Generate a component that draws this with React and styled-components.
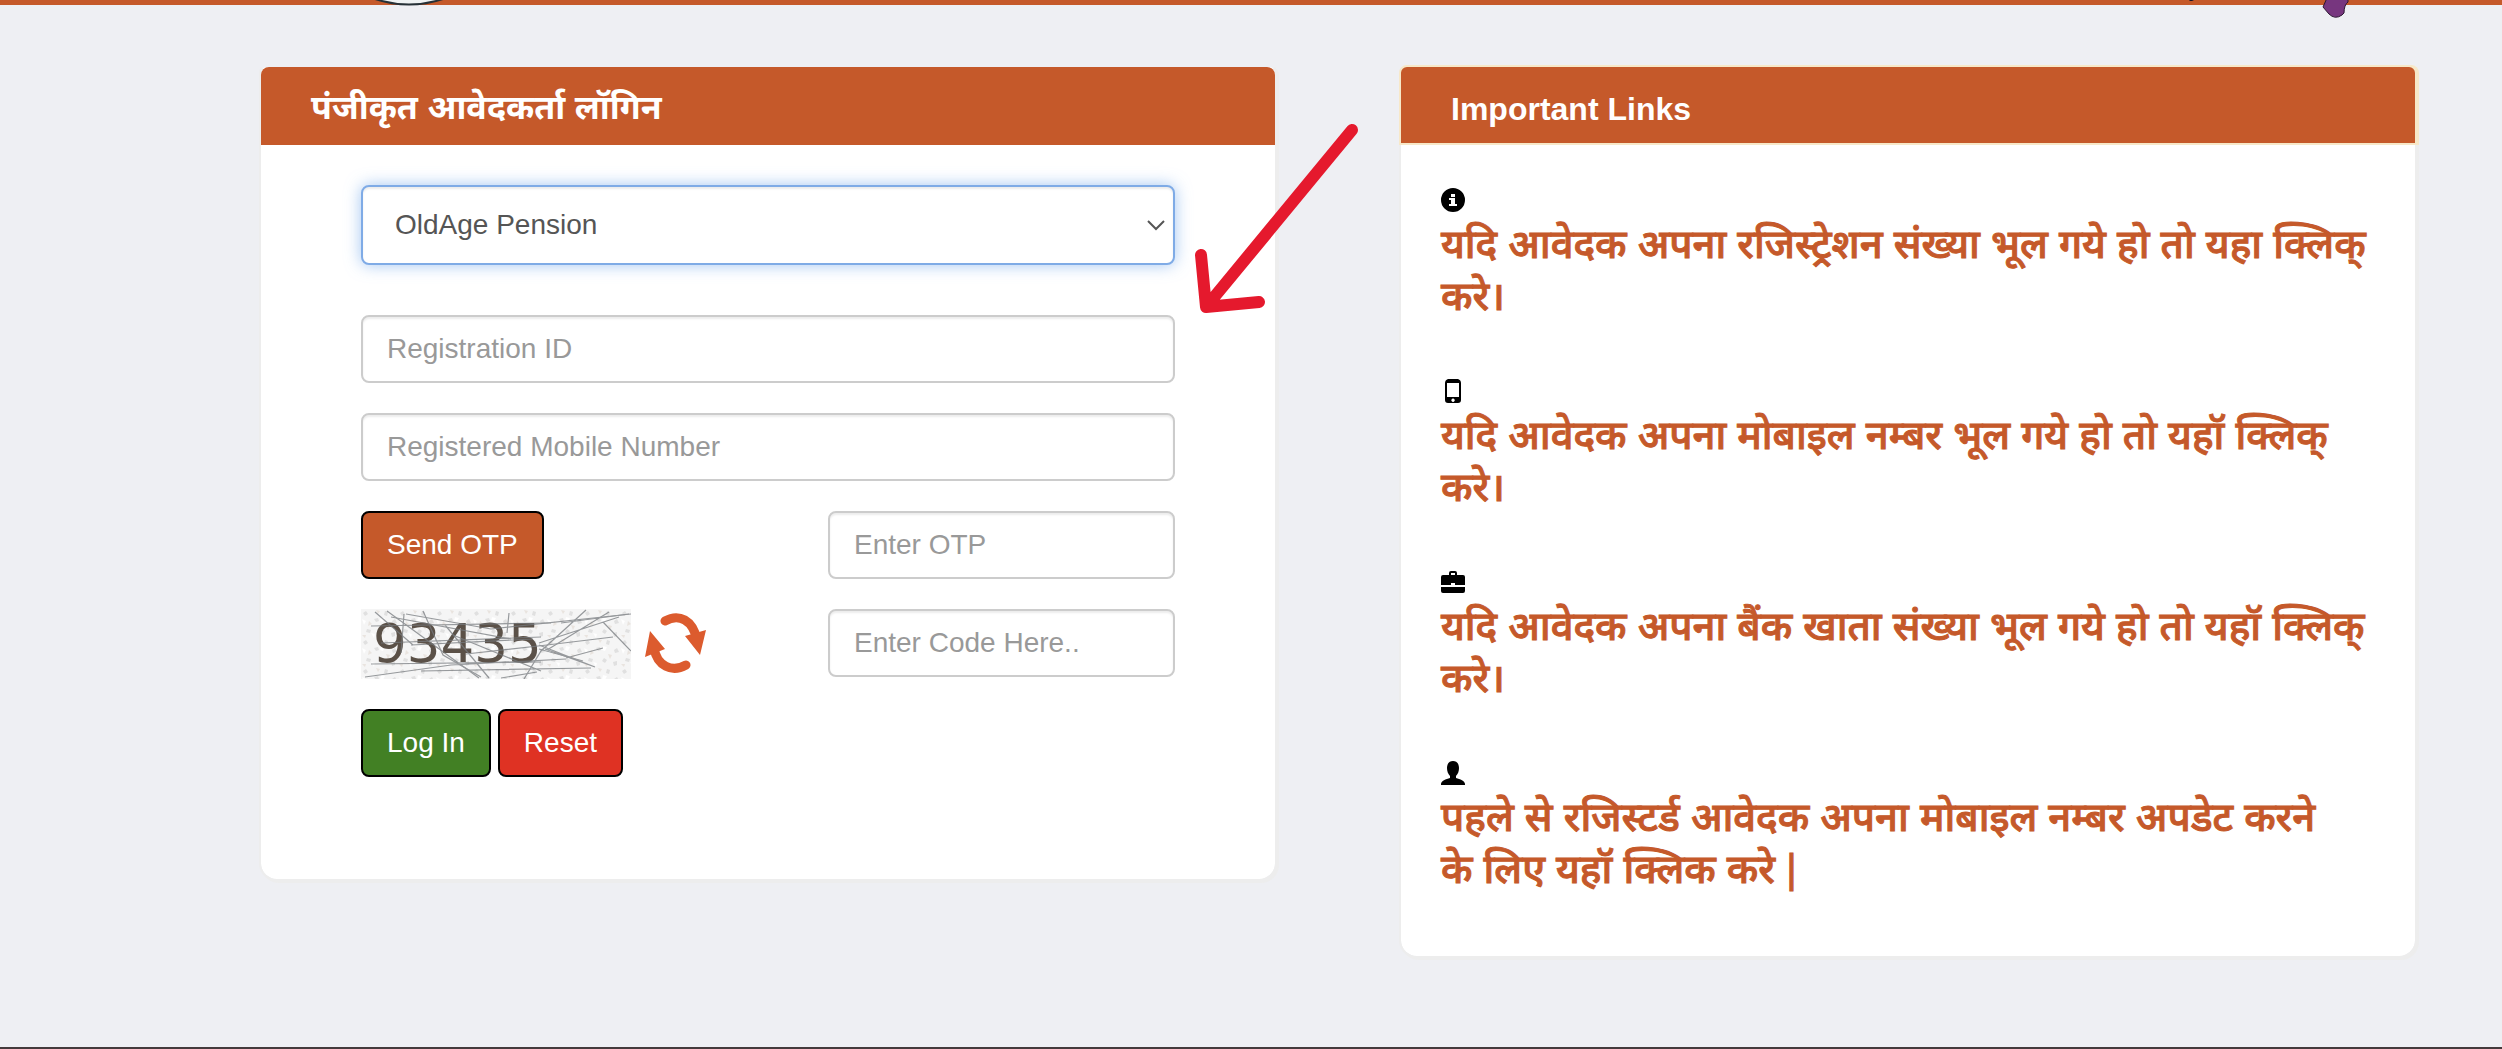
import React, { useState } from "react";
import styled, { createGlobalStyle } from "styled-components";

const fontStack = `"Liberation Sans", Arial, "Nirmala UI", "Noto Sans Devanagari", "Noto Sans", sans-serif`;
const brand = "#c5592a";

const GlobalStyle = createGlobalStyle`
  *, *::before, *::after { box-sizing: border-box; }
  body {
    margin: 0;
    background: #eeeff3;
    font-family: ${fontStack};
    font-size: 28px;
    line-height: 40px;
    color: #333;
  }
`;

const Page = styled.div`
  min-height: 100vh;
  display: flex;
  flex-direction: column;
`;

const TopBar = styled.header`
  position: relative;
  height: 5px;
  background: ${brand};
`;

const Emblem = styled.svg`
  position: absolute;
  top: 0;
  left: ${(p) => p.$left};
`;

const Main = styled.main`
  flex: 1;
  display: grid;
  grid-template-columns: repeat(2, minmax(0, 1fr));
  align-items: start;
  gap: 122px;
  padding: 60px 85px 80px 259px;
  @media (max-width: 1500px) {
    grid-template-columns: minmax(0, 1fr);
    gap: 60px;
    padding: 60px;
  }
`;

const Panel = styled.section`
  border: 2px solid #ededed;
  border-radius: 18px;
  border-top-color: transparent;
  border-top-left-radius: 8px;
  border-top-right-radius: 8px;
  box-shadow: 2px 2px 0 #ededed;
  background: #fff;
  background-clip: padding-box;
`;

const PanelHeader = styled.div`
  margin: ${(p) => (p.$outlined ? "-2px -2px 0" : "0")};
  padding: ${(p) => (p.$outlined ? "22px 50px 14px" : "20px 50px 18px")};
  border: ${(p) => (p.$outlined ? "2px solid #f7e8c8" : "0")};
  border-radius: 8px 8px 0 0;
  box-shadow: ${(p) => (p.$outlined ? "2px 0 0 #f7e8c8" : "none")};
  background: ${brand};
`;

const PanelTitle = styled.h2`
  margin: 0;
  color: #fff;
  font-size: ${(p) => (p.$large ? "34px" : "32px")};
  line-height: 40px;
  font-weight: 700;
`;

const LoginForm = styled.form`
  display: flex;
  flex-direction: column;
  gap: 30px;
  padding: 40px 100px 102px;
`;

const FormRow = styled.div`
  display: grid;
  grid-template-columns: minmax(0, 1fr) 347px;
  align-items: start;
`;

const SelectWrap = styled.div`
  position: relative;
  margin-bottom: 20px;
`;

const PensionSelect = styled.select`
  display: block;
  width: 100%;
  height: 80px;
  padding: 0 32px;
  appearance: none;
  border: 2px solid #7fabe6;
  border-radius: 8px;
  background: #fff;
  color: #555;
  font: 28px/40px ${fontStack};
  outline: 0;
  box-shadow: inset 0 2px 2px rgba(0, 0, 0, 0.075), 0 0 16px rgba(102, 160, 233, 0.6);
`;

const Caret = styled.svg`
  position: absolute;
  right: 10px;
  top: 35px;
  pointer-events: none;
`;

const TextInput = styled.input`
  display: block;
  width: 100%;
  height: 68px;
  padding: 12px 24px;
  border: 2px solid #ccc;
  border-radius: 8px;
  background: #fff;
  color: #555;
  font: 28px/40px ${fontStack};
  box-shadow: inset 0 2px 2px rgba(0, 0, 0, 0.075);
  &::placeholder { color: #999; opacity: 1; }
`;

const Button = styled.button`
  height: 68px;
  padding: 0 24px;
  justify-self: start;
  border: 2px solid #000;
  border-radius: 8px;
  background: ${(p) => p.$fill};
  color: #fff;
  font: 28px/40px ${fontStack};
  cursor: pointer;
`;

const ButtonGroup = styled.div`
  display: flex;
  gap: 7px;
`;

const CaptchaGroup = styled.div`
  display: flex;
  align-items: flex-start;
  gap: 14px;
`;

const RefreshButton = styled.button`
  display: flex;
  align-items: center;
  height: 68px;
  padding: 0;
  border: 0;
  background: none;
  cursor: pointer;
`;

const LinkList = styled.ul`
  list-style: none;
  margin: 0;
  padding: 43px 36px 61px 40px;
  display: flex;
  flex-direction: column;
  gap: 57px;
`;

const LinkItem = styled.li`
  display: flex;
  flex-direction: column;
  gap: 6px;
`;

const HelpLink = styled.a`
  color: ${brand};
  font-size: 40px;
  line-height: 52px;
  font-weight: 500;
  -webkit-text-stroke: 1px ${brand};
  text-decoration: none;
  white-space: pre-line;
`;

const FooterRule = styled.div`
  height: 2px;
  background: #43393b;
`;

const ArrowMark = styled.svg`
  position: absolute;
  left: 1190px;
  top: 118px;
  pointer-events: none;
  @media (max-width: 1500px) { display: none; }
`;

const icons = {
  info: (
    <path fillRule="evenodd" d="M12 0a12 12 0 1 0 0 24 12 12 0 0 0 0-24zM10 6h4v3h-4zM8 10h6v6h2v2H8v-2h2v-4H8z" />
  ),
  phone: (
    <path fillRule="evenodd" d="M7 0h10q3 1 3 4v17q0 3-3 3H7q-3 0-3-3V4q0-3 3-4zM6 4v14h12V4zm6 15.500a1.700 1.700 0 1 0 .1 0z" />
  ),
  briefcase: (
    <path fillRule="evenodd" d="M8 5V3q0-2 2-2h4q2 0 2 2v2h6q2 0 2 2v8H14v-2h-4v2H0V7q0-2 2-2zm2 0h4V3h-4zM0 17h24v4q0 2-2 2H2q-2 0-2-2z" />
  ),
  user: (
    <path d="M12 0c4 0 6 3 6 7 0 3-1 6-3 8v2c4 1 9 3 9 6v1H0v-1c0-3 5-5 9-6v-2c-2-2-3-5-3-8 0-4 2-7 6-7z" />
  ),
};

const links = [
  { icon: "info", text: "यदि आवेदक अपना रजिस्ट्रेशन संख्या भूल गये हो तो यहा क्लिक् करे।" },
  { icon: "phone", text: "यदि आवेदक अपना मोबाइल नम्बर भूल गये हो तो यहॉ क्लिक् करे।" },
  { icon: "briefcase", text: "यदि आवेदक अपना बैंक खाता संख्या भूल गये हो तो यहॉ क्लिक् करे।" },
  { icon: "user", text: "पहले से रजिस्टर्ड आवेदक अपना मोबाइल नम्बर अपडेट करने\nके लिए यहॉ क्लिक करे |" },
];

function CaptchaImage() {
  return (
    <svg width="270" height="70" viewBox="0 0 270 70" role="img" aria-label="Captcha">
      <defs>
        <pattern id="specks" width="37" height="29" patternUnits="userSpaceOnUse">
          <rect width="37" height="29" fill="#f5f5f5" />
          <g fill="#e0e0e0">
            <path d="M2 4l3-2 2 3-3 2zM13 10l4-1 1 3-3 1zM24 2l3 1-1 4-3-1zM31 12l3-2 2 4-4 1zM6 20l4 1-1 3-4-1zM19 23l2-3 3 2-2 3zM30 24l4-1v4l-3 1z" />
          </g>
          <g fill="#e9e4df">
            <path d="M8 12l3 3-4 2zM25 16l4 1-2 4zM15 1l4 1-2 3zM1 26l4 0-1 3z" />
          </g>
          <g fill="#fff">
            <path d="M20 8l4 1-2 4-3-1zM10 24l4 1-1 4zM1 10l4 2-2 4z" />
          </g>
        </pattern>
      </defs>
      <rect width="270" height="70" fill="url(#specks)" />
      <text x="12" y="53" fontFamily='"DejaVu Sans", Verdana, sans-serif' fontSize="53" fill="#5b5148">93435</text>
      <g stroke="#777b7f" strokeWidth="1.200" fill="none" opacity="0.75">
        <path d="M14 3L52 36M43 5L40 44M26 2L118 69M45 5L130 20L270 5M4 68L90 56L205 50M10 55L180 53" />
        <path d="M62 2L82 46L120 68M84 16L128 69M20 34L180 28M50 36L172 30M10 17L190 14M105 45L186 36L252 28" />
        <path d="M225 1L180 42L163 70M248 3L186 41M258 8L178 34M268 5L200 14M242 13L270 42M184 40L234 58L178 36" />
        <path d="M205 49L242 39M178 40L222 52M60 62L230 59M92 26L180 62M140 69L176 63M30 8L150 30M148 4L146 24" />
      </g>
    </svg>
  );
}

function RefreshIcon() {
  return (
    <svg width="62" height="62" viewBox="0 0 62 62" aria-hidden="true">
      <g fill="none" stroke="#dc5b2e" strokeWidth="9" strokeLinecap="round">
        <path d="M20 9C34 1 48 8 52 28" />
        <path d="M41 53C27 61 12 54 9 36" />
      </g>
      <path fill="#dc5b2e" d="M40 24L61 18L55 43zM5 19L20 37L0 45z" />
    </svg>
  );
}

export default function App() {
  const [pension, setPension] = useState("old");
  return (
    <Page>
      <GlobalStyle />
      <TopBar>
        <Emblem $left="370px" width="78" height="6" viewBox="0 0 78 6" aria-hidden="true">
          <path d="M2 -2Q39 11 76 -2z" fill="#eef2f3" stroke="#253036" strokeWidth="2" />
        </Emblem>
        <Emblem $left="87.500%" width="5" height="2" viewBox="0 0 5 2" aria-hidden="true">
          <path d="M0 0h5l-2 1h-2z" fill="#141428" />
        </Emblem>
        <Emblem $left="92.800%" width="28" height="20" viewBox="0 0 28 20" aria-hidden="true">
          <path d="M5 -2L1 7L7 14Q13 20 20 15L22 13Q22 5 26 2V-2z" fill="#77367f" stroke="#2d1833" strokeWidth="1" />
        </Emblem>
      </TopBar>
      <Main>
        <Panel>
          <PanelHeader>
            <PanelTitle $large>पंजीकृत आवेदकर्ता लॉगिन</PanelTitle>
          </PanelHeader>
          <LoginForm onSubmit={(e) => e.preventDefault()}>
            <SelectWrap>
              <PensionSelect aria-label="Pension scheme" value={pension} onChange={(e) => setPension(e.target.value)}>
                <option value="old">OldAge Pension</option>
              </PensionSelect>
              <Caret width="18" height="11" viewBox="0 0 18 11" aria-hidden="true">
                <path d="M1 1L9 9L17 1" fill="none" stroke="#555" strokeWidth="2" />
              </Caret>
            </SelectWrap>
            <TextInput aria-label="Registration ID" placeholder="Registration ID" />
            <TextInput aria-label="Registered Mobile Number" placeholder="Registered Mobile Number" />
            <FormRow>
              <Button type="button" $fill={brand}>Send OTP</Button>
              <TextInput aria-label="Enter OTP" placeholder="Enter OTP" />
            </FormRow>
            <FormRow>
              <CaptchaGroup>
                <CaptchaImage />
                <RefreshButton type="button" aria-label="Refresh code"><RefreshIcon /></RefreshButton>
              </CaptchaGroup>
              <TextInput aria-label="Enter Code" placeholder="Enter Code Here.." />
            </FormRow>
            <ButtonGroup>
              <Button type="submit" $fill="#428024">Log In</Button>
              <Button type="reset" $fill="#df3223">Reset</Button>
            </ButtonGroup>
          </LoginForm>
        </Panel>
        <Panel>
          <PanelHeader $outlined>
            <PanelTitle>Important Links</PanelTitle>
          </PanelHeader>
          <LinkList>
            {links.map((link) => (
              <LinkItem key={link.icon}>
                <svg width="24" height="24" viewBox="0 0 24 24" aria-hidden="true">{icons[link.icon]}</svg>
                <HelpLink href="#">{link.text}</HelpLink>
              </LinkItem>
            ))}
          </LinkList>
        </Panel>
      </Main>
      <FooterRule />
      <ArrowMark width="176" height="200" viewBox="0 0 176 200" aria-hidden="true">
        <path d="M162 12L16 189M11 137L16 189L69 184" fill="none" stroke="#e5192d" strokeWidth="12" strokeLinecap="round" strokeLinejoin="round" />
      </ArrowMark>
    </Page>
  );
}
